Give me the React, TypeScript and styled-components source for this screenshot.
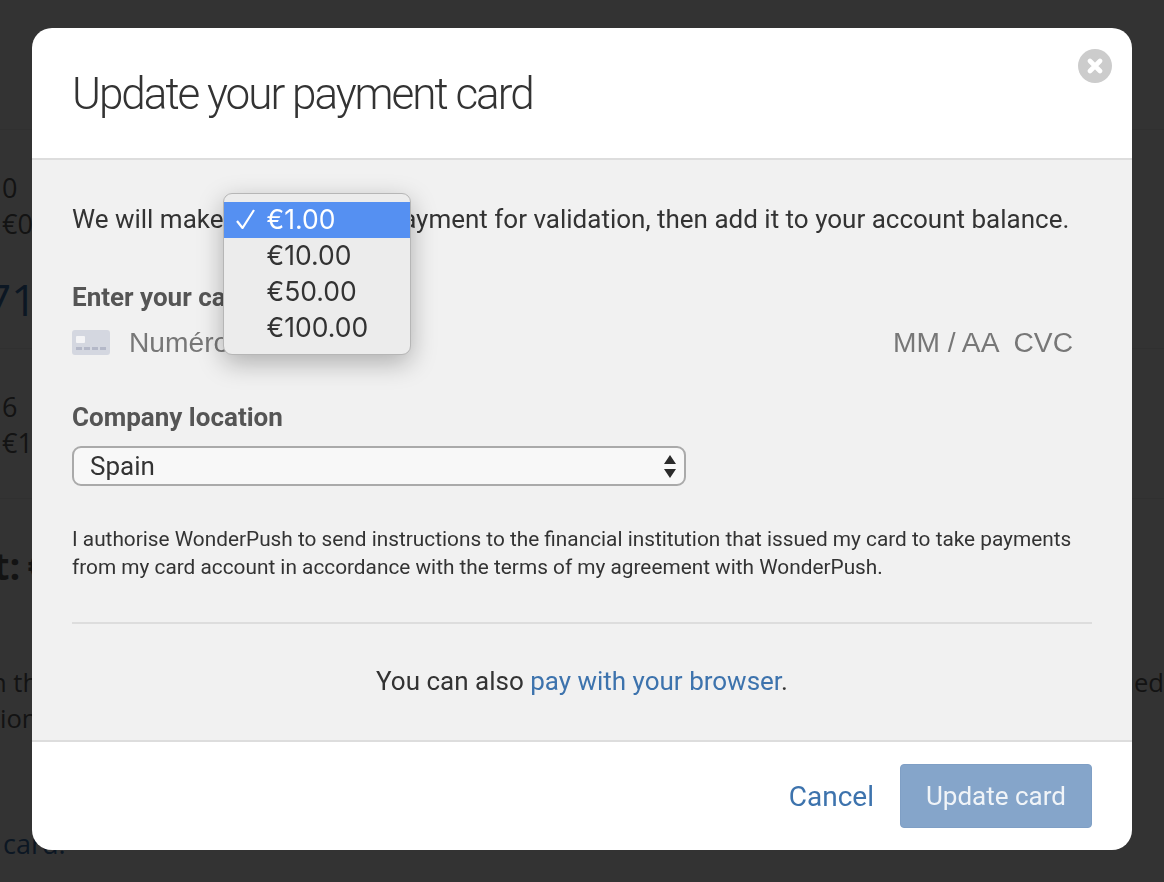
import styled, { createGlobalStyle } from "styled-components"

const GlobalStyle = createGlobalStyle`
  html, body {
    margin: 0;
    height: 100%;
    overflow: hidden;
    background: #fff;
    font-family: Roboto, "Liberation Sans", sans-serif;
  }
`

const amounts = ["€1.00", "€10.00", "€50.00", "€100.00"]

const CardIcon = () => (
  <svg width="38" height="25" viewBox="0 0 38 25" fill="none">
    <rect width="38" height="25" rx="3" fill="#d4d7e0" />
    <rect x="4" y="6" width="9" height="7" rx="1" fill="#f4f4f6" />
    <path d="M4 18.5h6M12 18.5h6M20 18.5h6M28 18.5h6" stroke="#b4b8c8" strokeWidth="3" />
  </svg>
)

const CloseIcon = () => (
  <svg width="16" height="16" viewBox="0 0 16 16">
    <path d="M3 3l10 10M13 3L3 13" stroke="#fff" strokeWidth="4.6" strokeLinecap="round" />
  </svg>
)

const CheckIcon = () => (
  <svg width="19" height="20" viewBox="0 0 19 20" fill="none">
    <path d="M1 12l5.5 7L18 1" stroke="#fff" strokeWidth="2.2" />
  </svg>
)

const App = () => {
  return (
    <>
      <GlobalStyle />
      <Page>
        <PageRow $height={219}>
          <Amount>0</Amount>
          <Amount>€0</Amount>
          <BigNumber>71</BigNumber>
        </PageRow>
        <PageRow $height={150}>
          <Amount>6</Amount>
          <Amount>€1</Amount>
        </PageRow>
        <PageHeading>t: €</PageHeading>
        <PageText>
          <CutWord>n th</CutWord>
          <span>ued</span>
        </PageText>
        <PageText>
          <span>ion</span>
        </PageText>
        <PageLink>card.</PageLink>
      </Page>

      <Overlay>
        <Modal>
          <CloseButton>
            <CloseIcon />
          </CloseButton>
          <ModalHeader>
            <Title>Update your payment card</Title>
          </ModalHeader>
          <ModalBody>
            <Intro>
              We will make
              <AmountAnchor>
                <AmountMenu>
                  {amounts.map((amount, i) => (
                    <AmountOption key={amount} $selected={i === 0}>
                      <Check>{i === 0 && <CheckIcon />}</Check>
                      {amount}
                    </AmountOption>
                  ))}
                </AmountMenu>
              </AmountAnchor>
              payment for validation, then add it to your account balance.
            </Intro>
            <FieldLabel>Enter your card</FieldLabel>
            <CardField>
              <CardIcon />
              <CardNumber>Numéro de carte</CardNumber>
              <CardExtra>MM / AA</CardExtra>
              <CardExtra>CVC</CardExtra>
            </CardField>
            <LocationLabel>Company location</LocationLabel>
            <CountrySelect>
              Spain
              <svg width="12" height="23" viewBox="0 0 12 23">
                <path d="M6 0l6 9H0zM6 23L0 14h12z" fill="#2b2b2b" />
              </svg>
            </CountrySelect>
            <Legal>
              I authorise WonderPush to send instructions to the financial institution that issued my card to take
              payments from my card account in accordance with the terms of my agreement with WonderPush.
            </Legal>
            <Divider />
            <AltPayment>
              You can also <TextLink>pay with your browser</TextLink>.
            </AltPayment>
          </ModalBody>
          <ModalFooter>
            <CancelLink>Cancel</CancelLink>
            <SubmitButton>Update card</SubmitButton>
          </ModalFooter>
        </Modal>
      </Overlay>
    </>
  )
}

export default App

const Page = styled.div`
  height: 882px;
  padding-top: 129px;
  box-sizing: border-box;
  overflow: hidden;
  font-family: "Open Sans", sans-serif;
  color: #5e5e5e;
`

const PageRow = styled.div<{ $height: number }>`
  box-sizing: border-box;
  height: ${(p) => p.$height}px;
  padding: 40px 0 0 2px;
  border-top: 1px solid #eee;
`

const Amount = styled.div`
  font-size: 27px;
  line-height: 36px;
`

const BigNumber = styled.div`
  margin: 36px 0 0 -16px;
  font-size: 44px;
  line-height: 42px;
  color: #3d73ad;
`

const PageHeading = styled.div`
  border-top: 1px solid #eee;
  padding: 42px 0 76px;
  margin-left: -7px;
  font-size: 38px;
  line-height: 48px;
  font-weight: 700;
  word-spacing: -3px;
`

const PageText = styled.div`
  display: flex;
  justify-content: space-between;
  font-size: 25.6px;
  line-height: 36px;
`

const CutWord = styled.span`
  margin-left: -9px;
`

const PageLink = styled.div`
  margin: 89px 0 0 3px;
  font-size: 27px;
  line-height: 36px;
  color: #3d73ad;
`

const Overlay = styled.div`
  position: fixed;
  inset: 0;
  box-sizing: border-box;
  padding: 28px 32px 32px;
  background: rgba(0, 0, 0, 0.8);
`

const Modal = styled.div`
  position: relative;
  display: flex;
  flex-direction: column;
  height: 822px;
  border-radius: 20px;
  overflow: hidden;
  background: #fff;
  color: #333;
`

const CloseButton = styled.div`
  position: absolute;
  top: 21px;
  right: 20px;
  display: flex;
  align-items: center;
  justify-content: center;
  width: 34px;
  height: 34px;
  border-radius: 50%;
  background: #ccc;
`

const ModalHeader = styled.div`
  box-sizing: border-box;
  height: 132px;
  padding: 0 40px;
  display: flex;
  align-items: center;
  border-bottom: 2px solid #ddd;
`

const Title = styled.h1`
  margin: 2px 0 0;
  font-size: 44px;
  font-weight: 300;
  letter-spacing: -2px;
  color: #333;
`

const ModalBody = styled.div`
  flex: 1;
  box-sizing: border-box;
  padding: 41px 40px 0;
  background: #f1f1f1;
`

const Intro = styled.div`
  font-size: 26px;
  line-height: 36px;
  white-space: nowrap;
`

const AmountAnchor = styled.span`
  position: relative;
  display: inline-block;
  width: 164px;
  height: 36px;
  vertical-align: top;
`

const AmountMenu = styled.div`
  position: absolute;
  top: -8px;
  left: -1px;
  box-sizing: border-box;
  width: 188px;
  height: 162px;
  padding-top: 8px;
  border: 1px solid #b6b6b6;
  border-radius: 9px;
  background: #ececec;
  box-shadow: 0 8px 26px rgba(0, 0, 0, 0.28);
  font-family: Inter, "Liberation Sans", sans-serif;
  font-size: 26.5px;
`

const AmountOption = styled.div<{ $selected: boolean }>`
  display: flex;
  align-items: center;
  box-sizing: border-box;
  height: 36px;
  padding-bottom: 2px;
  background: ${(p) => (p.$selected ? "#5590f2" : "transparent")};
  color: ${(p) => (p.$selected ? "#fff" : "#333")};
`

const Check = styled.span`
  display: flex;
  align-items: center;
  box-sizing: border-box;
  width: 43px;
  padding-left: 12px;
`

const FieldLabel = styled.div`
  margin-top: 42px;
  font-size: 26px;
  line-height: 36px;
  font-weight: 700;
  color: #555;
`

const CardField = styled.div`
  display: flex;
  align-items: center;
  gap: 14px;
  height: 36px;
  margin-top: 9px;
  padding-right: 19px;
  font-family: "Liberation Sans", sans-serif;
  font-size: 28.2px;
  color: #777;
`

const CardNumber = styled.span`
  flex: 1;
  margin-left: 5px;
`

const CardExtra = styled.span``

const LocationLabel = styled(FieldLabel)`
  margin-top: 39px;
`

const CountrySelect = styled.div`
  display: flex;
  align-items: center;
  justify-content: space-between;
  box-sizing: border-box;
  width: 614px;
  height: 40px;
  margin-top: 11px;
  padding: 0 8px 0 16px;
  border: 2px solid #aaa;
  border-radius: 9px;
  background: #f8f8f8;
  font-size: 26px;
  color: #333;
`

const Legal = styled.p`
  margin: 39px 0 0;
  font-size: 20.8px;
  line-height: 28px;
  color: #333;
`

const Divider = styled.hr`
  margin: 41px 0 0;
  border: 0;
  border-top: 2px solid #ddd;
`

const AltPayment = styled.div`
  margin-top: 39px;
  text-align: center;
  font-size: 26px;
  line-height: 36px;
`

const TextLink = styled.span`
  color: #3d73ad;
`

const ModalFooter = styled.div`
  box-sizing: border-box;
  height: 110px;
  display: flex;
  align-items: center;
  justify-content: flex-end;
  gap: 26px;
  padding: 0 40px;
  border-top: 2px solid #ddd;
`

const CancelLink = styled.span`
  font-size: 28px;
  color: #3d73ad;
`

const SubmitButton = styled.div`
  box-sizing: border-box;
  display: flex;
  align-items: center;
  justify-content: center;
  width: 192px;
  height: 64px;
  border: 1px solid #7f9fc5;
  border-radius: 4px;
  background: #85a5ca;
  font-size: 26px;
  color: #f0f4f8;
`
